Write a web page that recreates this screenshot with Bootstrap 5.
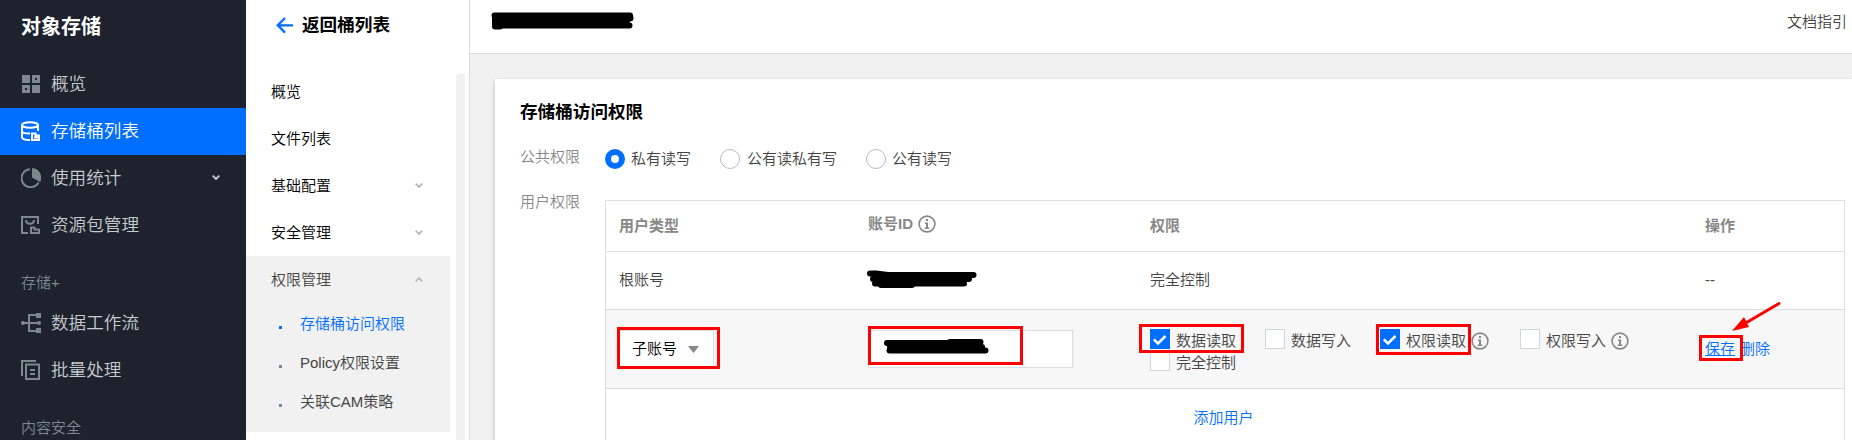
<!DOCTYPE html>
<html lang="zh-CN">
<head>
<meta charset="utf-8">
<title>对象存储</title>
<link href="https://cdn.jsdelivr.net/npm/bootstrap@5.3.0/dist/css/bootstrap.min.css" rel="stylesheet">
<style>
body{font-family:"Liberation Sans","Noto Sans CJK SC",sans-serif;font-size:15px;font-weight:350;line-height:20px;color:#444;height:440px;background:#f1f1f1}
a{color:#006eff;text-decoration:none}
.side{width:246px;background:#1e222d;flex:none}
.side h1{font-size:20px;line-height:24px;margin:15px 0 22px 21px;color:#fff}
.side .nav-link{height:47px;padding:0 26px 2px 21px;font-size:17.6px;color:#c5cbcf;gap:10px}
.side .nav-link svg{width:20px;height:20px;color:#7c878e;flex:none}
.side .nav-link.active{background:#006eff;color:#fff}
.side .nav-link.active svg{color:#fff}
.side .nav-link .chev{width:8px;height:5px;color:#c5cbcf}
.grp{padding:24px 0 7px 21px;color:#7c878e}
.sub{width:224px;border-right:1px solid #ddd;background:#fff;flex:none}
.back{height:73px;padding:13px 0 0 30px;color:#000;font-size:17.6px;line-height:24px;font-weight:700;gap:9px}
.subnav{width:204px}
.subnav .nav-link{height:47px;padding:0 27px 0 25px;color:#000}
.subnav .nav-link.first{height:42px;padding-bottom:5px}
.subnav .open{height:176px;background:#f1f1f1}
.subnav .open .nav-link{color:#444}
.chev{width:8px;height:5px;color:#bbb}
.leaf{padding-top:1px}
.leaf a{height:39px;padding-left:33px;gap:18px;color:#444}
.leaf a::before{content:"";width:3px;height:3px;margin-top:8px;background:#7c878e}
.leaf a.active{color:#006eff}
.leaf a.active::before{background:#006eff}
.track{width:9px;height:367px;background:#f1f1f1;border-radius:4px 4px 0 0;margin-left:6px}
.topbar{height:54px;border-bottom:1px solid #ddd;background:#fff;padding:12px 5px 0 21px}
.panel{margin:25px 0 0 25px;height:380px;padding:0 7px 0 25px;background:#fff;box-shadow:0 2px 4px rgba(54,58,80,.3)}
.panel h2{font-size:17.6px;line-height:24px;margin:0;padding-top:21px;color:#000}
.lab{width:85px;color:#888;flex:none}
.rd{width:20px;height:20px;border:1px solid #bbb;border-radius:50%;background:#fff;flex:none}
.rd.on{border:6px solid #006eff}
.grid{width:1240px;height:246px;table-layout:fixed;border:1px solid #ddd;border-bottom:0;border-collapse:separate;border-spacing:0}
.grid th,.grid td{padding:0 0 0 13px;border-bottom:1px solid #ddd;vertical-align:middle}
.grid .root td{padding-bottom:2px}
.grid td.add{padding:0 3px 0 0;border-bottom:0}
.grid th{color:#888}
.cb{width:20px;height:20px;border:1px solid #cfd5de;background:#fff;flex:none}
.cb.on{border:0;background:#006eff}
.cb svg{display:block}
.cb + span,.opt .info{margin-top:4px}
.opt .info{margin-left:-1px}
.info{width:18px;height:18px;color:#888;flex:none}
.opt{width:115px;gap:6px;height:22px}
.pick{width:97px;height:38px;margin-left:-2px;padding:0 14px;border:1px solid #ddd;background:#fff;color:#000}
.field{width:205px;height:38px;border:1px solid #ddd;background:#fff}
.marks{left:0;top:0;pointer-events:none}
</style>
</head>
<body class="overflow-hidden">
<svg width="0" height="0" class="position-absolute">
<symbol id="down" viewBox="0 0 8 5"><path d="M.7.7 4 4 7.3.7" fill="none" stroke="currentColor" stroke-width="1.9"/></symbol>
<symbol id="up" viewBox="0 0 8 5"><path d="M.7 4.300 4 1l3.300 3.300" fill="none" stroke="currentColor" stroke-width="1.9"/></symbol>
<symbol id="info" viewBox="0 0 18 18"><circle cx="9" cy="9" r="7.900" fill="none" stroke="currentColor" stroke-width="1.600"/><path d="M8 4h2v2H8zM7 7.500h3v5h1.300V14H6.700v-1.500H8V9H7z" fill="currentColor"/></symbol>
<symbol id="tick" viewBox="0 0 20 20"><path d="M3.800 10.300 8 14.500 15.500 7" fill="none" stroke="#fff" stroke-width="2.500"/></symbol>
</svg>
<div class="d-flex h-100 position-relative">
<aside class="side">
<h1 class="fw-bold">对象存储</h1>
<nav class="nav flex-column flex-nowrap">
<a class="nav-link d-flex align-items-center" href="#"><svg viewBox="0 0 20 20" fill="currentColor"><path d="M1 1h8v8H1zM11 11h8v8h-8z"/><path fill-rule="evenodd" d="M11 1h8v8h-8zm3 3v2h2V4zM1 11h8v8H1zm3 3v2h2v-2z"/></svg>概览</a>
<a class="nav-link active d-flex align-items-center" href="#"><svg viewBox="0 0 20 20" fill="none" stroke="currentColor" stroke-width="2"><ellipse cx="9" cy="4" rx="8" ry="2.800"/><path d="M1 4v12c0 1.800 3 3 8 3M17 4v6M1 10c0 1.600 3 2.600 8 2.600"/><path d="M11 12.500h3.500v2H18V19h-7zM13 16.500h4"/></svg>存储桶列表</a>
<a class="nav-link d-flex align-items-center" href="#"><svg viewBox="0 0 20 20"><path d="M9 1.200A9 9 0 1 0 17.500 14.500" fill="none" stroke="currentColor" stroke-width="2"/><path d="M11 0a9.500 9.500 0 0 1 8 14l-8-4.500z" fill="currentColor"/></svg>使用统计<svg class="chev ms-auto"><use href="#down"/></svg></a>
<a class="nav-link d-flex align-items-center" href="#"><svg viewBox="0 0 20 20" fill="none" stroke="currentColor" stroke-width="2"><path d="M7 18H1V2h16v7M5 5c0 5 8 5 8 0M10 12.500h3.500v2H18V18h-8z"/></svg>资源包管理</a>
<div class="grp">存储+</div>
<a class="nav-link d-flex align-items-center" href="#"><svg viewBox="0 0 20 20" fill="none" stroke="currentColor" stroke-width="2"><path d="M1 10h18M15 2H8v16h7"/><path fill="currentColor" stroke="none" d="M15 0h5v5h-5zM15 15h5v5h-5z"/><circle cx="2" cy="10" r="2" fill="currentColor" stroke="none"/><circle cx="18" cy="10" r="2" fill="currentColor" stroke="none"/></svg>数据工作流</a>
<a class="nav-link d-flex align-items-center" href="#"><svg viewBox="0 0 20 20" fill="none" stroke="currentColor" stroke-width="2"><path d="M1 16V1h14M5 4.500h13V19H5zM9 10h5M9 14h5"/></svg>批量处理</a>
<div class="grp pb-0 text-nowrap">内容安全</div>
</nav>
</aside>
<div class="sub">
<div class="back d-flex"><svg class="mt-1" width="17" height="17" viewBox="0 0 17 17" fill="none" stroke="#006eff" stroke-width="2.300"><path d="M9 1 1.800 8.300 9 15.600M2 8.300h15"/></svg>返回桶列表</div>
<div class="d-flex">
<nav class="subnav nav flex-column flex-nowrap">
<a class="nav-link first d-flex align-items-center" href="#">概览</a>
<a class="nav-link d-flex align-items-center" href="#">文件列表</a>
<a class="nav-link d-flex align-items-center justify-content-between" href="#">基础配置<svg class="chev"><use href="#down"/></svg></a>
<a class="nav-link d-flex align-items-center justify-content-between" href="#">安全管理<svg class="chev"><use href="#down"/></svg></a>
<div class="open">
<a class="nav-link d-flex align-items-center justify-content-between" href="#">权限管理<svg class="chev"><use href="#up"/></svg></a>
<div class="leaf">
<a class="active d-flex align-items-center" href="#">存储桶访问权限</a>
<a class="d-flex align-items-center" href="#">Policy权限设置</a>
<a class="d-flex align-items-center" href="#">关联CAM策略</a>
</div></div>
</nav>
<div class="track"></div>
</div>
</div>
<main class="flex-grow-1">
<header class="topbar d-flex justify-content-end align-items-start">文档指引</header>
<section class="panel">
<h2 class="fw-bold">存储桶访问权限</h2>
<div class="d-flex" style="margin-top:23px"><div class="lab">公共权限</div>
<div class="d-flex align-items-center" style="margin-top:2px">
<span class="rd on"></span><span style="margin:0 29px 0 6px">私有读写</span>
<span class="rd"></span><span style="margin:0 29px 0 7px">公有读私有写</span>
<span class="rd"></span><span style="margin-left:6px">公有读写</span></div></div>
<div class="d-flex" style="margin-top:23px"><div class="lab">用户权限</div>
<div style="margin-top:8px">
<table class="grid">
<colgroup><col style="width:249px"><col style="width:282px"><col style="width:555px"><col></colgroup>
<thead><tr style="height:51px"><th>用户类型</th><th><div class="d-flex align-items-center pb-1">账号ID<svg class="info" style="margin-left:5px"><use href="#info"/></svg></div></th><th>权限</th><th>操作</th></tr></thead>
<tbody>
<tr class="root" style="height:58px"><td>根账号</td><td></td><td>完全控制</td><td>--</td></tr>
<tr style="height:79px;background:#f7f7f7"><td><div class="pick d-flex align-items-center justify-content-between">子账号<svg width="11" height="7"><path d="M0 0h11L5.500 7z" fill="#888"/></svg></div></td>
<td><div class="field"></div></td>
<td><div class="d-flex flex-wrap" style="width:500px;margin-top:1px">
<div class="opt d-flex align-items-center"><span class="cb on"><svg width="20" height="20"><use href="#tick"/></svg></span><span>数据读取</span></div>
<div class="opt d-flex align-items-center"><span class="cb"></span><span>数据写入</span></div>
<div class="opt d-flex align-items-center" style="width:140px"><span class="cb on"><svg width="20" height="20"><use href="#tick"/></svg></span><span>权限读取</span><svg class="info"><use href="#info"/></svg></div>
<div class="opt d-flex align-items-center" style="width:120px"><span class="cb"></span><span>权限写入</span><svg class="info"><use href="#info"/></svg></div>
<div class="opt d-flex align-items-center"><span class="cb"></span><span>完全控制</span></div></div></td>
<td><a href="#" class="text-decoration-underline">保存</a><a href="#" style="margin-left:5px">删除</a></td></tr>
<tr><td colspan="4" class="add text-center"><a href="#">添加用户</a></td></tr>
</tbody></table>
</div></div>
</section>
</main>
<!-- redactions and red call-outs drawn over the page -->
<svg class="marks position-absolute" width="1852" height="440" fill="none" stroke-linecap="round" stroke-linejoin="round">
<g stroke="#000" stroke-width="6"><path d="M494.500 15.500H630M496 21H627M496 25.500H629.500M495 15.500V26.500H500M630 15.500 630.500 18.500"/>
<path d="M870 273.500H876L888 275H973.500M873 279H969M875 283.500H964M881 285H912"/>
<path d="M887 343H980M950 342H980.500M890 347H982M889.500 350.500H985.500"/></g>
<g stroke="#f00" stroke-width="3" stroke-linejoin="miter">
<path d="M618.500 328.500h100v39h-100zM869.500 327.500h152v36h-152zM1140.500 325.500h102v26h-102zM1377.500 325.500h92v28h-92zM1700.500 336.500h41v23h-41z"/>
<path d="M1779 303.500 1744 324"/></g>
<path d="M1732 331 1744 317 1749 327z" fill="#f00"/>
</svg>
</div>
<script src="https://cdn.jsdelivr.net/npm/bootstrap@5.3.0/dist/js/bootstrap.bundle.min.js"></script>
</body>
</html>
